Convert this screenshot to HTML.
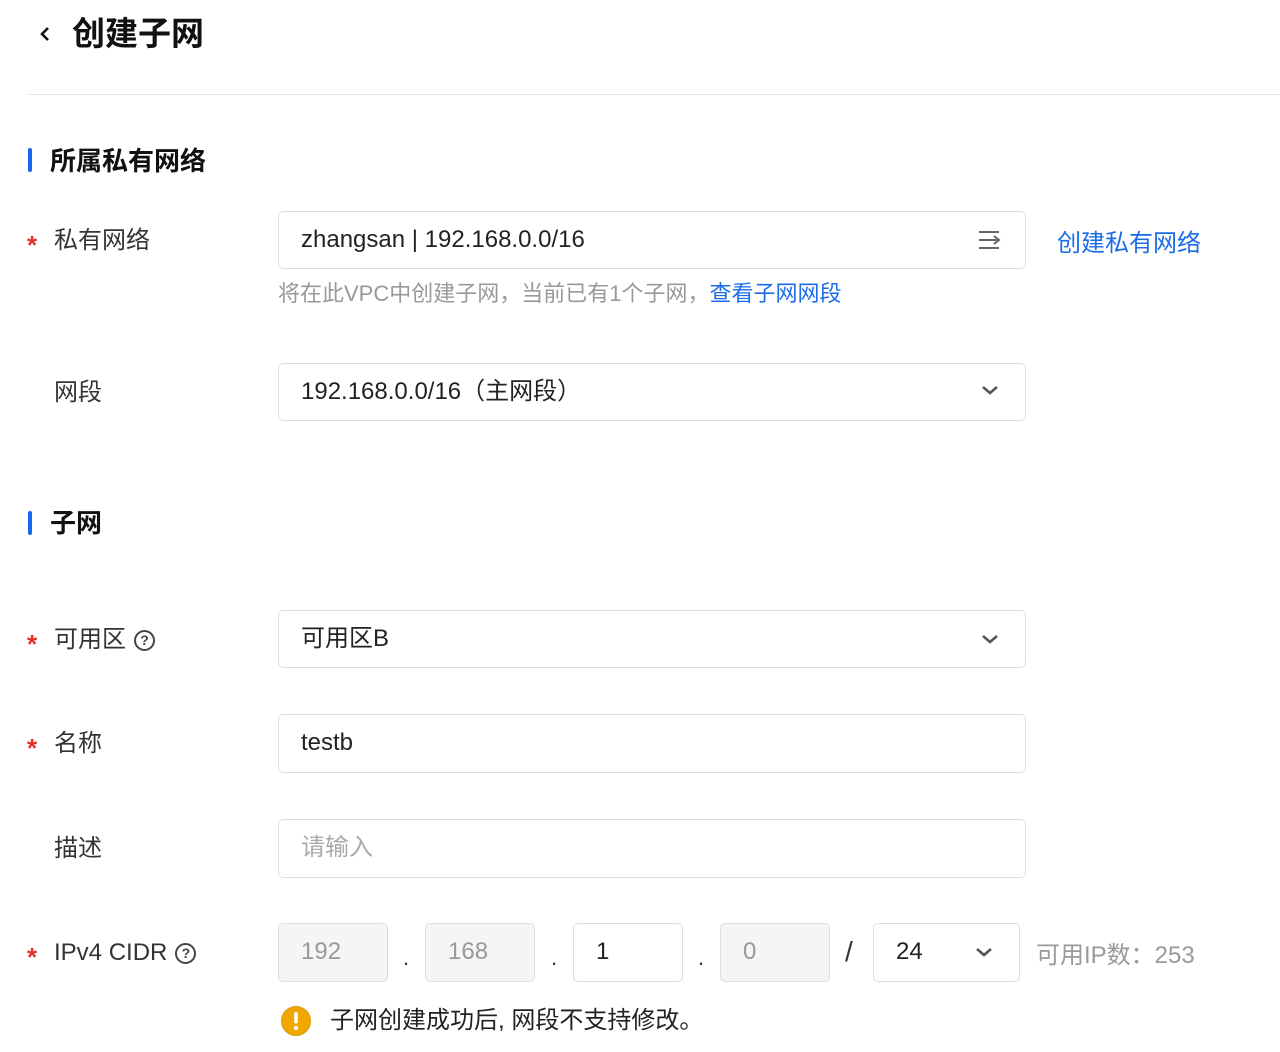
<!DOCTYPE html>
<html><head><meta charset="utf-8"><style>
*{margin:0;padding:0;box-sizing:border-box}
body{width:1280px;height:1052px;background:#fff;position:relative;overflow:hidden;font-family:"Liberation Sans","Noto Sans CJK SC",sans-serif;color:#222}
.a{position:absolute;white-space:nowrap}
.lbl{font-size:24px;color:#333;line-height:30px}
.star{color:#e0302a;font-size:26px;line-height:30px;font-weight:bold}
.box{position:absolute;border:1.5px solid #dcdee2;border-radius:5px;background:#fff;font-size:24px;line-height:55px;padding-left:22px;color:#222}
.g{background:#f4f5f7;color:#999;}
.sec{font-size:26px;font-weight:bold;color:#111;line-height:30px}
.bar{position:absolute;left:28px;width:4px;height:24px;background:#1a66f0;border-radius:2px}
.q{display:inline-block;width:21px;height:21px;border:2px solid #444;border-radius:50%;font-size:14px;line-height:17px;text-align:center;font-weight:bold;color:#444;vertical-align:2px;margin-left:8px}
</style></head><body>
<svg class="a" style="left:38px;top:25px" width="14" height="18" viewBox="0 0 14 18"><path d="M10 3 L4 9 L10 15" stroke="#111" stroke-width="2.6" fill="none"/></svg>
<div class="a" style="left:72px;top:13px;font-size:33px;line-height:42px;font-weight:bold;color:#111">创建子网</div>
<div class="a" style="left:28px;top:94px;width:1252px;height:1px;background:#e8e8e8"></div>

<div class="bar" style="top:148px"></div>
<div class="a sec" style="left:50px;top:146px">所属私有网络</div>

<div class="a star" style="left:27px;top:230px">*</div>
<div class="a lbl" style="left:54px;top:226px">私有网络</div>
<div class="box" style="left:278px;top:211px;width:748px;height:58px">zhangsan | 192.168.0.0/16</div>
<svg class="a" style="left:977px;top:229px" width="26" height="22" viewBox="0 0 26 22"><path d="M2 3H22M2 11H22M2 19H22M17 7l5 4-5 4" stroke="#666" stroke-width="2" fill="none"/></svg>
<div class="a" style="left:1057px;top:229px;font-size:24px;line-height:30px;color:#1a6ce8">创建私有网络</div>
<div class="a" style="left:278px;top:280px;font-size:22px;line-height:28px;color:#999">将在此VPC中创建子网，当前已有1个子网，<span style="color:#1a6ce8">查看子网网段</span></div>

<div class="a lbl" style="left:54px;top:378px">网段</div>
<div class="box" style="left:278px;top:363px;width:748px;height:58px">192.168.0.0/16（主网段）</div>

<div class="bar" style="top:511px"></div>
<div class="a sec" style="left:50px;top:508px">子网</div>

<div class="a star" style="left:27px;top:629px">*</div>
<div class="a lbl" style="left:54px;top:625px">可用区<span class="q">?</span></div>
<div class="box" style="left:278px;top:610px;width:748px;height:58px">可用区B</div>

<div class="a star" style="left:27px;top:733px">*</div>
<div class="a lbl" style="left:54px;top:729px">名称</div>
<div class="box" style="left:278px;top:714px;width:748px;height:59px">testb</div>

<div class="a lbl" style="left:54px;top:834px">描述</div>
<div class="box" style="left:278px;top:819px;width:748px;height:59px;color:#aaa">请输入</div>

<div class="a star" style="left:27px;top:942px">*</div>
<div class="a lbl" style="left:54px;top:938px">IPv4 CIDR<span class="q">?</span></div>
<div class="box g" style="left:278px;top:923px;width:110px;height:59px">192</div>
<div class="a" style="left:403px;top:945px;font-size:22px;color:#333">.</div>
<div class="box g" style="left:425px;top:923px;width:110px;height:59px">168</div>
<div class="a" style="left:551px;top:945px;font-size:22px;color:#333">.</div>
<div class="box" style="left:573px;top:923px;width:110px;height:59px">1</div>
<div class="a" style="left:698px;top:945px;font-size:22px;color:#333">.</div>
<div class="box g" style="left:720px;top:923px;width:110px;height:59px">0</div>
<div class="a" style="left:845px;top:936px;font-size:28px;color:#333">/</div>
<div class="box" style="left:873px;top:923px;width:147px;height:59px">24</div>
<div class="a" style="left:1036px;top:941px;font-size:24px;line-height:30px;color:#999">可用IP数：253</div>

<svg class="a" style="left:280px;top:1005px" width="32" height="32" viewBox="0 0 32 32"><circle cx="16" cy="16" r="14.5" fill="#f0a800" stroke="#d99a10"/><rect x="14.2" y="7" width="3.6" height="11.5" rx="1.5" fill="#fff"/><circle cx="16" cy="23" r="2.1" fill="#fff"/></svg>
<div class="a" style="left:330px;top:1006px;font-size:24px;line-height:30px;color:#222">子网创建成功后, 网段不支持修改。</div>

<svg class="a" style="left:980px;top:383px" width="20" height="14" viewBox="0 0 20 14"><path d="M3 4l7 6 7-6" stroke="#555" stroke-width="2.6" fill="none"/></svg>
<svg class="a" style="left:980px;top:632px" width="20" height="14" viewBox="0 0 20 14"><path d="M3 4l7 6 7-6" stroke="#555" stroke-width="2.6" fill="none"/></svg>
<svg class="a" style="left:974px;top:945px" width="20" height="14" viewBox="0 0 20 14"><path d="M3 4l7 6 7-6" stroke="#555" stroke-width="2.6" fill="none"/></svg>
</body></html>
